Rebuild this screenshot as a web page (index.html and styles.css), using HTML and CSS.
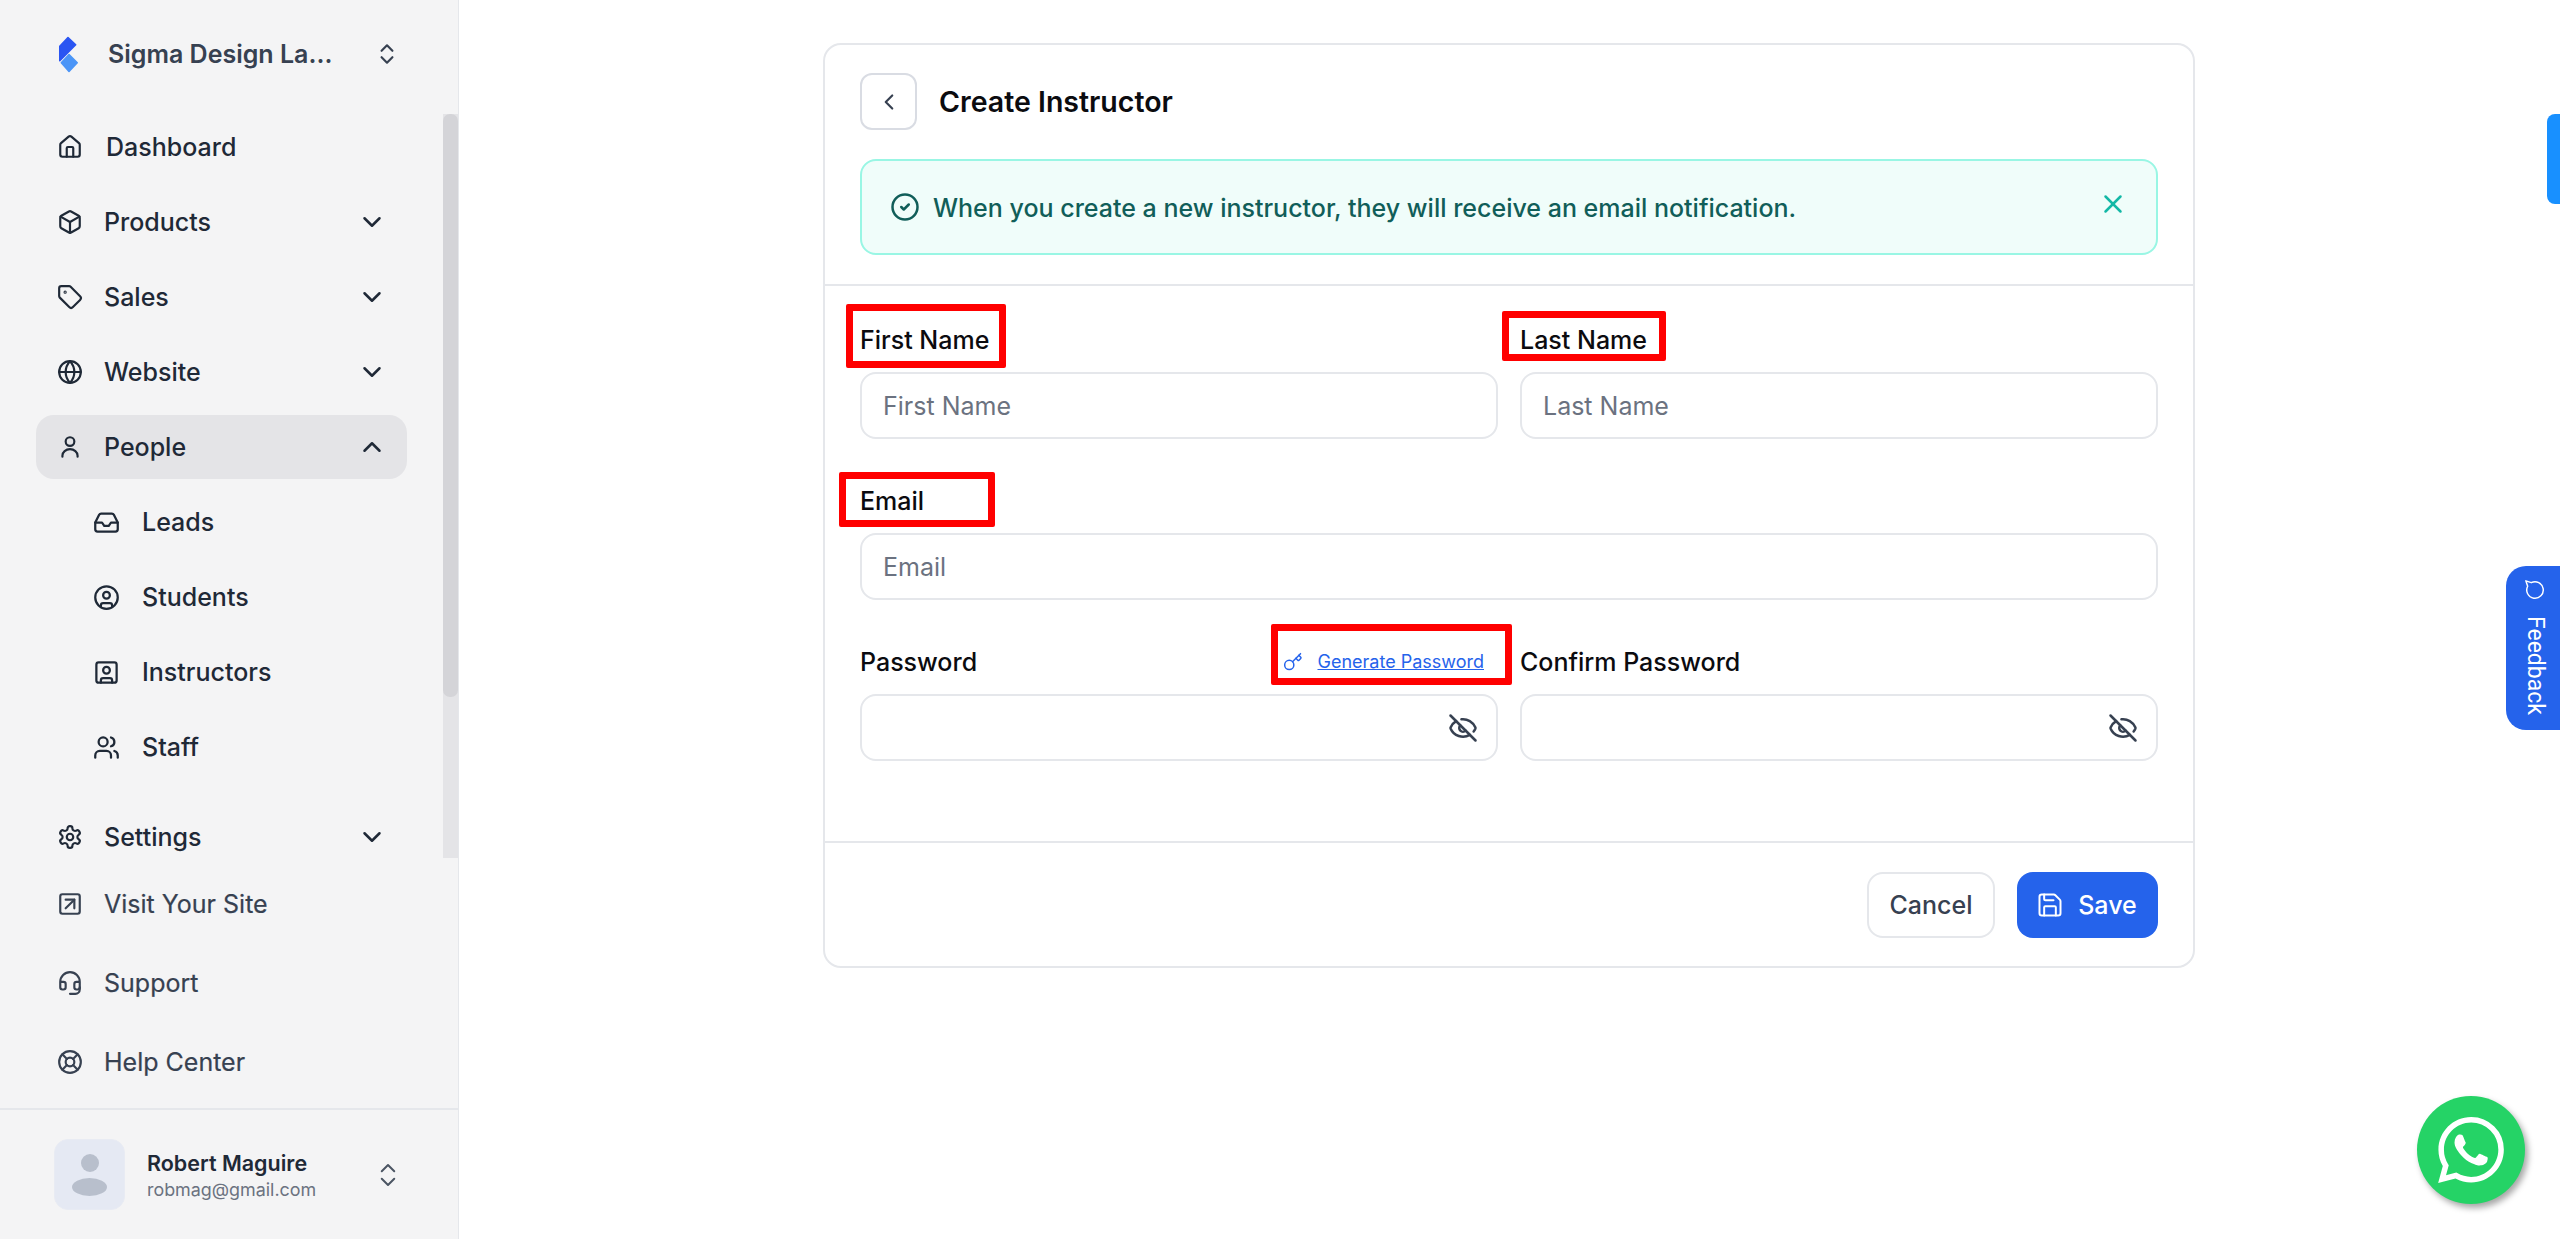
FILE: index.html
```html
<!DOCTYPE html>
<html lang="en">
<head>
<meta charset="utf-8">
<title>Create Instructor</title>
<link rel="stylesheet" href="styles.css">
</head>
<body>
<svg class="defs" width="0" height="0" aria-hidden="true">
  <symbol id="i-home" viewBox="0 0 24 24"><path d="M15 21v-8a1 1 0 0 0-1-1h-4a1 1 0 0 0-1 1v8"/><path d="M3 10a2 2 0 0 1 .709-1.528l7-5.999a2 2 0 0 1 2.582 0l7 5.999A2 2 0 0 1 21 10v9a2 2 0 0 1-2 2H5a2 2 0 0 1-2-2z"/></symbol>
  <symbol id="i-box" viewBox="0 0 24 24"><path d="M21 8a2 2 0 0 0-1-1.73l-7-4a2 2 0 0 0-2 0l-7 4A2 2 0 0 0 3 8v8a2 2 0 0 0 1 1.73l7 4a2 2 0 0 0 2 0l7-4A2 2 0 0 0 21 16Z"/><path d="m3.3 7 8.7 5 8.7-5"/><path d="M12 22V12"/></symbol>
  <symbol id="i-tag" viewBox="0 0 24 24"><path d="M12.586 2.586A2 2 0 0 0 11.172 2H4a2 2 0 0 0-2 2v7.172a2 2 0 0 0 .586 1.414l8.704 8.704a2.426 2.426 0 0 0 3.42 0l6.58-6.58a2.426 2.426 0 0 0 0-3.42z"/><circle cx="7.5" cy="7.5" r=".5"/></symbol>
  <symbol id="i-globe" viewBox="0 0 24 24"><circle cx="12" cy="12" r="10"/><path d="M12 2a14.5 14.5 0 0 0 0 20 14.5 14.5 0 0 0 0-20"/><path d="M2 12h20"/></symbol>
  <symbol id="i-user" viewBox="0 0 24 24"><circle cx="12" cy="7" r="4"/><path d="M5 21v-1a7 6 0 0 1 14 0v1"/></symbol>
  <symbol id="i-inbox" viewBox="0 0 24 24"><polyline points="22 12 16 12 14 15 10 15 8 12 2 12"/><path d="M5.45 5.11 2 12v6a2 2 0 0 0 2 2h16a2 2 0 0 0 2-2v-6l-3.45-6.89A2 2 0 0 0 16.76 4H7.24a2 2 0 0 0-1.79 1.11z"/></symbol>
  <symbol id="i-circle-user" viewBox="0 0 24 24"><circle cx="12" cy="12" r="10"/><circle cx="12" cy="10" r="3"/><path d="M7 20.662V19a2 2 0 0 1 2-2h6a2 2 0 0 1 2 2v1.662"/></symbol>
  <symbol id="i-square-user" viewBox="0 0 24 24"><rect x="3" y="3" width="18" height="18" rx="2"/><circle cx="12" cy="10" r="3"/><path d="M7 21v-2a2 2 0 0 1 2-2h6a2 2 0 0 1 2 2v2"/></symbol>
  <symbol id="i-users" viewBox="0 0 24 24"><path d="M16 21v-2a4 4 0 0 0-4-4H6a4 4 0 0 0-4 4v2"/><circle cx="9" cy="7" r="4"/><path d="M22 21v-2a4 4 0 0 0-3-3.87"/><path d="M16 3.13a4 4 0 0 1 0 7.75"/></symbol>
  <symbol id="i-settings" viewBox="0 0 24 24"><path d="M12.22 2h-.44a2 2 0 0 0-2 2v.18a2 2 0 0 1-1 1.73l-.43.25a2 2 0 0 1-2 0l-.15-.08a2 2 0 0 0-2.73.73l-.22.38a2 2 0 0 0 .73 2.73l.15.1a2 2 0 0 1 1 1.72v.51a2 2 0 0 1-1 1.74l-.15.09a2 2 0 0 0-.73 2.73l.22.38a2 2 0 0 0 2.73.73l.15-.08a2 2 0 0 1 2 0l.43.25a2 2 0 0 1 1 1.73V20a2 2 0 0 0 2 2h.44a2 2 0 0 0 2-2v-.18a2 2 0 0 1 1-1.73l.43-.25a2 2 0 0 1 2 0l.15.08a2 2 0 0 0 2.73-.73l.22-.39a2 2 0 0 0-.73-2.73l-.15-.08a2 2 0 0 1-1-1.74v-.5a2 2 0 0 1 1-1.74l.15-.09a2 2 0 0 0 .73-2.73l-.22-.38a2 2 0 0 0-2.73-.73l-.15.08a2 2 0 0 1-2 0l-.43-.25a2 2 0 0 1-1-1.73V4a2 2 0 0 0-2-2z"/><circle cx="12" cy="12" r="3"/></symbol>
  <symbol id="i-external" viewBox="0 0 24 24"><rect x="3" y="3" width="18" height="18" rx="2"/><path d="M8 8h8v8"/><path d="m8 16 8-8"/></symbol>
  <symbol id="i-headset" viewBox="0 0 24 24"><path d="M3 11h3a2 2 0 0 1 2 2v3a2 2 0 0 1-2 2H5a2 2 0 0 1-2-2v-5Zm0 0a9 9 0 1 1 18 0m0 0v5a2 2 0 0 1-2 2h-1a2 2 0 0 1-2-2v-3a2 2 0 0 1 2-2h3Z"/><path d="M21 16v2a4 4 0 0 1-4 4h-5"/></symbol>
  <symbol id="i-buoy" viewBox="0 0 24 24"><circle cx="12" cy="12" r="10"/><circle cx="12" cy="12" r="4"/><path d="m4.93 4.93 4.24 4.24"/><path d="m14.83 9.17 4.24-4.24"/><path d="m14.83 14.83 4.24 4.24"/><path d="m9.17 14.83-4.24 4.24"/></symbol>
  <symbol id="i-updown" viewBox="0 0 24 24"><path d="m7 15 5 5 5-5"/><path d="m7 9 5-5 5 5"/></symbol>
  <symbol id="i-down" viewBox="0 0 24 24"><path d="m6 9 6 6 6-6"/></symbol>
  <symbol id="i-up" viewBox="0 0 24 24"><path d="m18 15-6-6-6 6"/></symbol>
  <symbol id="i-left" viewBox="0 0 24 24"><path d="m15 18-6-6 6-6"/></symbol>
  <symbol id="i-check" viewBox="0 0 24 24"><circle cx="12" cy="12" r="10"/><path d="m9 12 2 2 4-4"/></symbol>
  <symbol id="i-x" viewBox="0 0 24 24"><path d="M18 6 6 18"/><path d="m6 6 12 12"/></symbol>
  <symbol id="i-key" viewBox="0 0 24 24"><path d="m15.5 7.5 2.3 2.3a1 1 0 0 0 1.4 0l2.1-2.1a1 1 0 0 0 0-1.4L19 4"/><path d="m21 2-9.6 9.6"/><circle cx="7.5" cy="15.5" r="5.5"/></symbol>
  <symbol id="i-eyeoff" viewBox="0 0 24 24"><path d="M10.733 5.076a10.744 10.744 0 0 1 11.205 6.575 1 1 0 0 1 0 .696 10.747 10.747 0 0 1-1.444 2.49"/><path d="M14.084 14.158a3 3 0 0 1-4.242-4.242"/><path d="M17.479 17.499a10.75 10.75 0 0 1-15.417-5.151 1 1 0 0 1 0-.696 10.75 10.75 0 0 1 4.446-5.143"/><path d="m2 2 20 20"/></symbol>
  <symbol id="i-save" viewBox="0 0 24 24"><path d="M15.2 3a2 2 0 0 1 1.4.6l3.8 3.8a2 2 0 0 1 .6 1.4V19a2 2 0 0 1-2 2H5a2 2 0 0 1-2-2V5a2 2 0 0 1 2-2z"/><path d="M17 21v-7a1 1 0 0 0-1-1H8a1 1 0 0 0-1 1v7"/><path d="M7 3v4a1 1 0 0 0 1 1h7"/></symbol>
  <symbol id="i-chat" viewBox="0 0 24 24"><path d="M7.9 20A9 9 0 1 0 4 16.1L2 22Z"/></symbol>
</svg>

<div class="app">
  <aside class="sidebar">
    <header class="brand">
      <svg class="logo" viewBox="0 0 20 36"><polygon class="logo-dark" points="1.5,10 9.5,1.5 17,8.5 1.5,24"/><polygon class="logo-light" points="10.5,18 18.5,26 10.5,34.5 3,26"/></svg>
      <span class="brand-name">Sigma Design La...</span>
      <svg class="ic ic-brand-sel"><use href="#i-updown"/></svg>
    </header>

    <div class="scroll">
      <nav class="nav">
        <a class="row"><svg class="ic"><use href="#i-home"/></svg><span class="lbl lbl-home">Dashboard</span></a>
        <a class="row"><svg class="ic"><use href="#i-box"/></svg><span class="lbl">Products</span><svg class="ic chev"><use href="#i-down"/></svg></a>
        <a class="row"><svg class="ic"><use href="#i-tag"/></svg><span class="lbl">Sales</span><svg class="ic chev"><use href="#i-down"/></svg></a>
        <a class="row"><svg class="ic"><use href="#i-globe"/></svg><span class="lbl">Website</span><svg class="ic chev"><use href="#i-down"/></svg></a>
        <a class="row row-active"><svg class="ic"><use href="#i-user"/></svg><span class="lbl">People</span><svg class="ic chev"><use href="#i-up"/></svg></a>
        <a class="row row-sub"><svg class="ic ic-sub"><use href="#i-inbox"/></svg><span class="lbl">Leads</span></a>
        <a class="row row-sub"><svg class="ic ic-sub"><use href="#i-circle-user"/></svg><span class="lbl">Students</span></a>
        <a class="row row-sub"><svg class="ic ic-sub"><use href="#i-square-user"/></svg><span class="lbl">Instructors</span></a>
        <a class="row row-sub"><svg class="ic ic-sub"><use href="#i-users"/></svg><span class="lbl">Staff</span></a>
        <a class="row row-after"><svg class="ic"><use href="#i-settings"/></svg><span class="lbl">Settings</span><svg class="ic chev"><use href="#i-down"/></svg></a>
      </nav>
      <div class="scrollbar"><div class="thumb"></div></div>
    </div>

    <div class="links">
      <a class="row row-link"><svg class="ic"><use href="#i-external"/></svg><span class="lbl">Visit Your Site</span></a>
      <a class="row row-link"><svg class="ic"><use href="#i-headset"/></svg><span class="lbl">Support</span></a>
      <a class="row row-link"><svg class="ic"><use href="#i-buoy"/></svg><span class="lbl">Help Center</span></a>
    </div>

    <footer class="account">
      <div class="avatar"><span class="av-head"></span><span class="av-body"></span></div>
      <div class="who">
        <div class="who-name">Robert Maguire</div>
        <div class="who-mail">robmag@gmail.com</div>
      </div>
      <svg class="ic ic-acc-sel"><use href="#i-updown"/></svg>
    </footer>
  </aside>

  <main class="main">
    <section class="card">
      <div class="card-head">
        <div class="title-row">
          <button class="back" type="button"><svg class="ic ic-back"><use href="#i-left"/></svg></button>
          <h1 class="title">Create Instructor</h1>
        </div>
        <div class="alert">
          <svg class="ic ic-alert"><use href="#i-check"/></svg>
          <span class="alert-text">When you create a new instructor, they will receive an email notification.</span>
          <svg class="ic ic-close"><use href="#i-x"/></svg>
        </div>
      </div>

      <form class="form">
        <div class="field">
          <label class="label">First Name</label>
          <input class="input" placeholder="First Name">
          <span class="mark mark-first"></span>
        </div>
        <div class="field">
          <label class="label">Last Name</label>
          <input class="input" placeholder="Last Name">
          <span class="mark mark-last"></span>
        </div>
        <div class="field field-wide">
          <label class="label">Email</label>
          <input class="input" placeholder="Email">
          <span class="mark mark-email"></span>
        </div>
        <div class="field">
          <div class="label-row">
            <label class="label">Password</label>
            <a class="gen"><svg class="ic ic-key"><use href="#i-key"/></svg><span class="gen-text">Generate Password</span></a>
          </div>
          <div class="pw"><input class="input" type="password"><svg class="ic ic-eye"><use href="#i-eyeoff"/></svg></div>
          <span class="mark mark-gen"></span>
        </div>
        <div class="field">
          <label class="label">Confirm Password</label>
          <div class="pw"><input class="input" type="password"><svg class="ic ic-eye"><use href="#i-eyeoff"/></svg></div>
        </div>
      </form>

      <div class="card-foot">
        <button class="btn btn-ghost" type="button">Cancel</button>
        <button class="btn btn-primary" type="button"><svg class="ic ic-save"><use href="#i-save"/></svg>Save</button>
      </div>
    </section>
  </main>
</div>

<div class="tab-blue"></div>
<div class="feedback"><svg class="ic ic-chat"><use href="#i-chat"/></svg><span>Feedback</span></div>
<div class="wa">
  <svg class="wa-logo" viewBox="0 0 24 24"><path d="M17.472 14.382c-.297-.149-1.758-.867-2.03-.967-.273-.099-.471-.148-.67.15-.197.297-.767.966-.94 1.164-.173.199-.347.223-.644.075-.297-.15-1.255-.463-2.39-1.475-.883-.788-1.48-1.761-1.653-2.059-.173-.297-.018-.458.13-.606.134-.133.298-.347.446-.52.149-.174.198-.298.298-.497.099-.198.05-.371-.025-.52-.075-.149-.669-1.612-.916-2.207-.242-.579-.487-.5-.669-.51-.173-.008-.371-.01-.57-.01-.198 0-.52.074-.792.372-.272.297-1.04 1.016-1.04 2.479 0 1.462 1.065 2.875 1.213 3.074.149.198 2.096 3.2 5.077 4.487.709.306 1.262.489 1.694.625.712.227 1.36.195 1.871.118.571-.085 1.758-.719 2.006-1.413.248-.694.248-1.289.173-1.413-.074-.124-.272-.198-.57-.347m-5.421 7.403h-.004a9.87 9.87 0 01-5.031-1.378l-.361-.214-3.741.982.998-3.648-.235-.374a9.86 9.86 0 01-1.51-5.26c.001-5.45 4.436-9.884 9.888-9.884 2.64 0 5.122 1.03 6.988 2.898a9.825 9.825 0 012.893 6.994c-.003 5.45-4.437 9.884-9.885 9.884m8.413-18.297A11.815 11.815 0 0012.05 0C5.495 0 .16 5.335.157 11.892c0 2.096.547 4.142 1.588 5.945L.057 24l6.305-1.654a11.882 11.882 0 005.683 1.448h.005c6.554 0 11.89-5.335 11.893-11.893a11.821 11.821 0 00-3.48-8.413z"/></svg>
</div>
</body>
</html>
```

FILE: styles.css
```css
* { box-sizing: border-box; }
html, body { margin: 0; height: 100%; }
body {
  font-family: Inter, "Noto Sans", sans-serif;
  color: #1f2937;
  background: #fff;
  overflow: hidden;
  position: relative;
}
.defs { position: absolute; }
.ic {
  width: 26px;
  height: 26px;
  flex: none;
  fill: none;
  stroke: currentColor;
  stroke-width: 2;
  stroke-linecap: round;
  stroke-linejoin: round;
}
.app { display: flex; height: 1239px; }

/* sidebar */
.sidebar {
  width: 459px;
  flex: none;
  height: 100%;
  display: flex;
  flex-direction: column;
  background: #f4f4f5;
  border-right: 1px solid #e5e7eb;
}
.brand {
  height: 114px;
  flex: none;
  display: flex;
  align-items: center;
  padding: 0 0 6px 58px;
}
.logo { width: 21px; height: 37px; flex: none; }
.logo-dark { fill: #2a55f2; stroke: #2a55f2; stroke-width: 1.5; stroke-linejoin: round; }
.logo-light { fill: #4b95f7; stroke: #4b95f7; stroke-width: 1.5; stroke-linejoin: round; }
.brand-name {
  margin-left: 29px;
  width: 224px;
  font-size: 25px;
  line-height: 32px;
  font-weight: 600;
  color: #374151;
  white-space: nowrap;
}
.ic-brand-sel { margin-left: 42px; color: #374151; }

.scroll { height: 744px; flex: none; display: flex; overflow: hidden; }
.nav {
  flex: 1;
  min-width: 0;
  display: flex;
  flex-direction: column;
  gap: 11px;
  padding: 1px 0 0 36px;
}
.scrollbar { width: 15px; flex: none; background: #e4e4e7; }
.thumb { height: 583px; background: #d4d4d8; border-radius: 7px; }

.row {
  width: 371px;
  height: 64px;
  flex: none;
  display: flex;
  align-items: center;
  padding: 0 20px 0 21px;
  border-radius: 18px;
  font-size: 25px;
  font-weight: 500;
  color: #1f2937;
}
.row-active { background: #e4e4e7; }
.row-sub { padding-left: 57px; }
.row-after { margin-top: 15px; }
.lbl { margin-left: 21px; line-height: 32px; flex: 1; white-space: nowrap; }
.lbl-home { margin-left: 23px; }
.ic-sub { width: 27px; height: 27px; }
.row-sub .lbl { margin-left: 22px; }
.chev { width: 30px; height: 30px; color: #1f2937; }

.links {
  flex: none;
  display: flex;
  flex-direction: column;
  gap: 15px;
  padding: 14px 0 14px 36px;
}
.row-link { font-weight: 400; color: #374151; -webkit-text-stroke: 0.2px #374151; }

.account {
  flex: 1;
  display: flex;
  align-items: center;
  padding: 0 0 0 54px;
  border-top: 2px solid #e5e7eb;
}
.avatar {
  width: 71px;
  height: 71px;
  flex: none;
  display: flex;
  flex-direction: column;
  align-items: center;
  gap: 6px;
  padding-top: 14px;
  background: #e5e9f3;
  border: 1px solid #e8ebf3;
  border-radius: 14px;
}
.av-head { width: 18px; height: 18px; border-radius: 50%; background: #b8bfcc; }
.av-body { width: 35px; height: 18px; border-radius: 50%; background: #b8bfcc; }
.who { margin-left: 22px; width: 205px; flex: none; }
.who-name { font-size: 21.5px; line-height: 28px; font-weight: 600; color: #1f2937; padding-top: 3px; }
.who-mail { font-size: 17.9px; line-height: 26px; color: #6b7280; }
.ic-acc-sel { margin-left: 21px; color: #4b5563; stroke-width: 1.6; width: 30px; height: 30px; }

/* main */
.main { flex: 1; min-width: 0; padding: 43px 0 0 364px; }
.card {
  width: 1372px;
  height: 925px;
  border: 2px solid #e5e7eb;
  border-radius: 18px;
  background: #fff;
  display: flex;
  flex-direction: column;
}
.card-head { padding: 28px 35px 29px; border-bottom: 2px solid #e5e7eb; }
.title-row { display: flex; align-items: center; gap: 22px; }
.back {
  width: 57px;
  height: 57px;
  display: flex;
  align-items: center;
  justify-content: center;
  padding: 0;
  background: #fff;
  border: 2px solid #d9dce3;
  border-radius: 12px;
  color: #374151;
}
.ic-back { width: 26px; height: 26px; }
.title { margin: 0; padding-top: 1px; font-size: 28.5px; line-height: 36px; font-weight: 600; color: #0b0b0f; }
.alert {
  margin-top: 29px;
  height: 96px;
  display: flex;
  align-items: center;
  padding: 0 28px 0 28px;
  background: #f0fdfa;
  border: 2px solid #99f6e4;
  border-radius: 16px;
  color: #115e59;
}
.ic-alert { width: 30px; height: 30px; }
.alert-text { margin-left: 13px; padding-top: 2px; flex: 1; font-size: 25px; line-height: 34px; font-weight: 500; }
.ic-close { width: 30px; height: 30px; color: #14b8a6; margin: -6px 0 0 0; }

.form {
  flex: 1;
  display: grid;
  grid-template-columns: 638px 638px;
  column-gap: 22px;
  row-gap: 47px;
  align-content: start;
  padding: 39px 35px 0;
}
.field { position: relative; display: flex; flex-direction: column; gap: 17px; }
.field-wide { grid-column: 1 / -1; }
.label { display: block; font-size: 25px; line-height: 30px; font-weight: 500; color: #0b0b0f; }
.label-row { display: flex; align-items: center; justify-content: space-between; padding-right: 14px; }
.input {
  display: block;
  width: 100%;
  height: 67px;
  padding: 1px 21px 0;
  font: 400 25px Inter, "Noto Sans", sans-serif;
  color: #1f2937;
  background: #fff;
  border: 2px solid #e5e7eb;
  border-radius: 16px;
  outline: none;
}
.input::placeholder { color: #6b7280; opacity: 1; }
.pw { position: relative; }
.ic-eye { position: absolute; right: 20px; top: 19px; width: 30px; height: 30px; color: #374151; }
.gen { display: flex; align-items: center; gap: 14px; color: #2563eb; }
.ic-key { width: 20px; height: 20px; stroke-width: 1.8; }
.gen-text { font-size: 18px; line-height: 24px; text-decoration: underline; }

.mark { position: absolute; border: 7px solid #ff0000; border-radius: 2px; pointer-events: none; }
.mark-first { left: -14px; top: -21px; width: 160px; height: 64px; }
.mark-last { left: -18px; top: -14px; width: 164px; height: 50px; }
.mark-email { left: -21px; top: -14px; width: 156px; height: 55px; }
.mark-gen { left: 411px; top: -23px; width: 241px; height: 61px; }

.card-foot {
  display: flex;
  justify-content: flex-end;
  align-items: center;
  gap: 22px;
  padding: 29px 35px 28px;
  border-top: 2px solid #e5e7eb;
}
.btn {
  height: 66px;
  display: flex;
  align-items: center;
  justify-content: center;
  font: 500 25px Inter, "Noto Sans", sans-serif;
  border-radius: 16px;
}
.btn-ghost { width: 128px; background: #fff; border: 2px solid #e5e7eb; color: #374151; }
.btn-primary { width: 141px; gap: 14px; padding: 0 2px 0 0; background: #2563eb; border: 0; color: #fff; }
.ic-save { width: 28px; height: 28px; stroke-width: 1.7; }

/* floating */
.tab-blue {
  position: absolute;
  right: 0;
  top: 114px;
  width: 13px;
  height: 90px;
  background: #1890ff;
  border-radius: 8px 0 0 8px;
}
.feedback {
  position: absolute;
  right: 0;
  top: 566px;
  width: 54px;
  height: 164px;
  display: flex;
  flex-direction: column;
  align-items: center;
  padding: 13px 0 0 4px;
  gap: 15px;
  background: #2563eb;
  border-radius: 20px 0 0 20px;
  color: #fff;
  font: 400 23px Roboto, sans-serif;
}
.feedback span { writing-mode: vertical-rl; line-height: 26px; }
.ic-chat { width: 22px; height: 22px; stroke-width: 1.6; transform: rotate(90deg); }
.wa {
  position: absolute;
  left: 2417px;
  top: 1096px;
  width: 108px;
  height: 108px;
  display: flex;
  align-items: center;
  justify-content: center;
  background: #25d366;
  border-radius: 50%;
  box-shadow: 3px 4px 6px rgba(0, 0, 0, 0.35);
}
.wa-logo { width: 66px; height: 66px; fill: #fff; }
```
